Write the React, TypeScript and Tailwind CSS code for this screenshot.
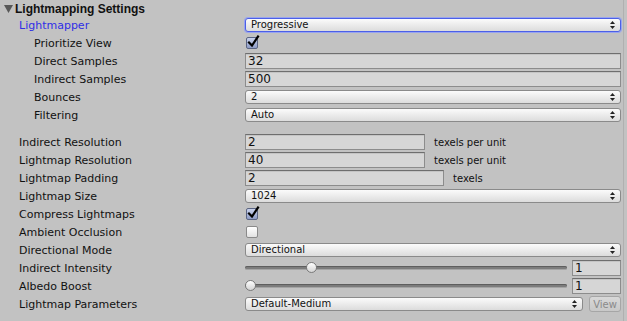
import React from 'react';

const font = { fontFamily: '"DejaVu Sans", "Liberation Sans", sans-serif' };

function Arrows() {
  return (
    <svg width="5" height="8" viewBox="0 0 5 8" className="shrink-0">
      <path d="M2.5 0 L5 3 L0 3 Z" fill="#222" />
      <path d="M2.5 8 L5 5 L0 5 Z" fill="#222" />
    </svg>
  );
}

function Dropdown({ value, focused = false, className = '' }: { value: string; focused?: boolean; className?: string }) {
  return (
    <div
      className={`h-[14px] flex items-center justify-between rounded-[3px] border pl-[5px] pr-[5px] text-[10px] leading-none text-[#111] bg-gradient-to-b from-[#fbfbfb] to-[#dcdcdc] ${
        focused ? 'border-[#4c5fe6] shadow-[0_0_0_1px_#98a4f0]' : 'border-[#8a8a8a]'
      } ${className}`}
    >
      <span>{value}</span>
      <Arrows />
    </div>
  );
}

function Field({ value, className = '' }: { value: string; className?: string }) {
  return (
    <div
      className={`h-[16px] flex items-center border border-[#8c8c8c] border-t-[#6e6e6e] bg-[#d6d6d6] pl-[2px] text-[12px] leading-none text-[#111] shadow-[inset_0_1px_0_#c4c4c4] ${className}`}
    >
      {value}
    </div>
  );
}

function Checkbox({ checked }: { checked: boolean }) {
  return (
    <div
      className={`w-[12px] h-[12px] ml-[1px] rounded-[2px] border relative ${
        checked
          ? 'border-[#5a6482] bg-gradient-to-b from-[#c9d2ec] to-[#8e9cc6]'
          : 'border-[#8a8a8a] bg-gradient-to-b from-[#ffffff] to-[#e2e2e2]'
      }`}
    >
      {checked && (
        <svg width="13" height="13" viewBox="0 0 13 13" className="absolute left-[0px] top-[-3px]">
          <path d="M2 7.5 L5 10.5 L11 1.5" fill="none" stroke="#000" strokeWidth="2.2" strokeLinecap="square" />
        </svg>
      )}
    </div>
  );
}

function Slider({ pos, value }: { pos: number; value: string }) {
  return (
    <div className="flex items-center gap-[5px] w-full">
      <div className="relative flex-1 h-[16px]">
        <div className="absolute left-0 right-0 top-[6px] h-[4px] rounded-[2px] bg-[#7c7c7c] border-b border-[#a4a4a4] shadow-[inset_0_1px_0_#5e5e5e]" />
        <div
          className="absolute top-[2px] w-[11px] h-[11px] rounded-full border border-[#7a7a7a] bg-gradient-to-b from-[#ffffff] to-[#d4d4d4]"
          style={{ left: pos }}
        />
      </div>
      <Field value={value} className="w-[49px]" />
    </div>
  );
}

function Row({ label, indent = 0, blue = false, children }: { label: string; indent?: number; blue?: boolean; children: React.ReactNode }) {
  return (
    <div className="h-[18px] flex items-center">
      <div
        className={`w-[245px] shrink-0 text-[11px] leading-none ${blue ? 'text-[#2f2fe6]' : 'text-[#111]'}`}
        style={{ paddingLeft: indent }}
      >
        {label}
      </div>
      <div className="flex-1 flex items-center">{children}</div>
    </div>
  );
}

export default function App() {
  return (
    <div className="w-[627px] h-[321px] bg-[#c2c2c2] overflow-hidden" style={font}>
      <div className="w-[624px] h-full border-r border-[#b0b0b0] pr-[2px]">
        <div className="h-[16px] flex items-center pl-[4px] pt-[2px]">
          <svg width="9" height="8" viewBox="0 0 9 8" className="mr-[2px]">
            <path d="M0 0 L9 0 L4.5 8 Z" fill="#585858" />
          </svg>
          <span className="text-[12px] font-bold leading-none text-[#111] font-['Liberation_Sans',sans-serif]">
            Lightmapping Settings
          </span>
        </div>

        <Row label="Lightmapper" indent={19} blue>
          <Dropdown value="Progressive" focused className="w-full" />
        </Row>
        <Row label="Prioritize View" indent={34}>
          <Checkbox checked />
        </Row>
        <Row label="Direct Samples" indent={34}>
          <Field value="32" className="w-full" />
        </Row>
        <Row label="Indirect Samples" indent={34}>
          <Field value="500" className="w-full" />
        </Row>
        <Row label="Bounces" indent={34}>
          <Dropdown value="2" className="w-full" />
        </Row>
        <Row label="Filtering" indent={34}>
          <Dropdown value="Auto" className="w-full" />
        </Row>

        <div className="h-[9px]" />

        <Row label="Indirect Resolution" indent={19}>
          <Field value="2" className="w-[180px]" />
          <span className="ml-[9px] text-[10px] text-[#111]">texels per unit</span>
        </Row>
        <Row label="Lightmap Resolution" indent={19}>
          <Field value="40" className="w-[180px]" />
          <span className="ml-[9px] text-[10px] text-[#111]">texels per unit</span>
        </Row>
        <Row label="Lightmap Padding" indent={19}>
          <Field value="2" className="w-[199px]" />
          <span className="ml-[9px] text-[10px] text-[#111]">texels</span>
        </Row>
        <Row label="Lightmap Size" indent={19}>
          <Dropdown value="1024" className="w-full" />
        </Row>
        <Row label="Compress Lightmaps" indent={19}>
          <Checkbox checked />
        </Row>
        <Row label="Ambient Occlusion" indent={19}>
          <Checkbox checked={false} />
        </Row>
        <Row label="Directional Mode" indent={19}>
          <Dropdown value="Directional" className="w-full" />
        </Row>
        <Row label="Indirect Intensity" indent={19}>
          <Slider pos={61} value="1" />
        </Row>
        <Row label="Albedo Boost" indent={19}>
          <Slider pos={0} value="1" />
        </Row>
        <Row label="Lightmap Parameters" indent={19}>
          <Dropdown value="Default-Medium" className="flex-1" />
          <div className="ml-[6px] w-[32px] h-[16px] rounded-[3px] border border-[#a6a6a6] bg-gradient-to-b from-[#d8d8d8] to-[#c8c8c8] flex items-center justify-center text-[10px] text-[#8a8a8a]">
            View
          </div>
        </Row>
      </div>
    </div>
  );
}
